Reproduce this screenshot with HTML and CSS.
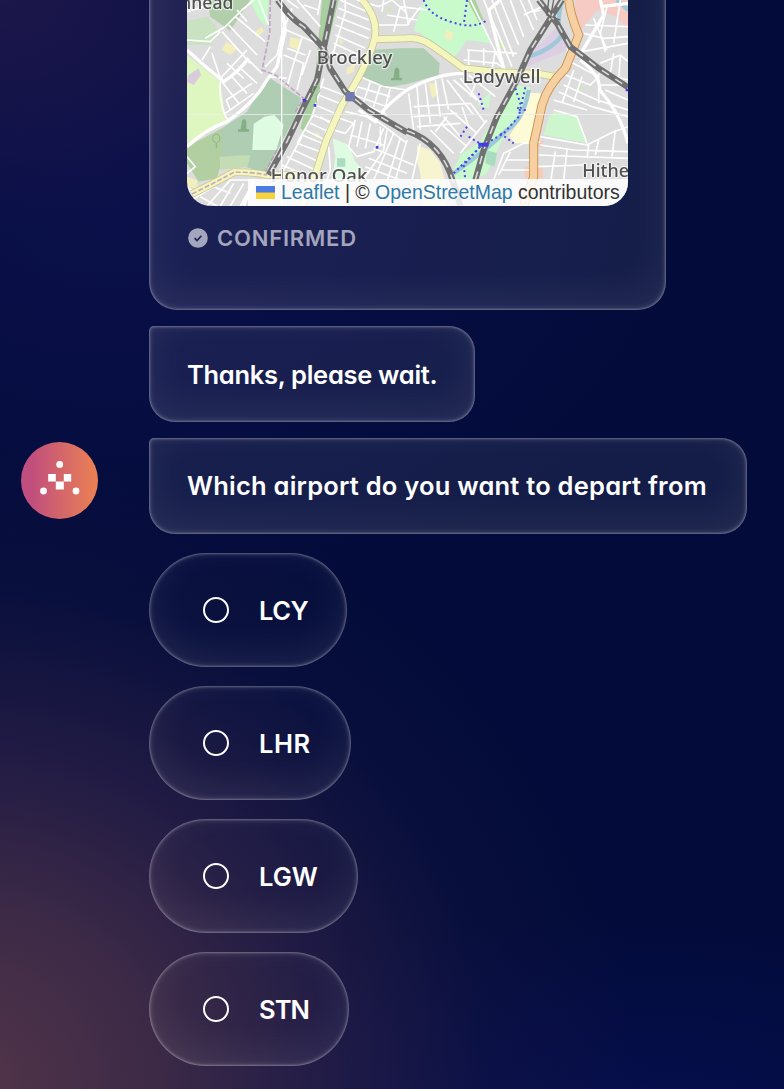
FILE: index.html
```
<!DOCTYPE html>
<html lang="en">
<head>
<meta charset="utf-8">
<title>Travel assistant</title>
<link rel="stylesheet" href="styles.css">
</head>
<body>
<main class="chat">
  <section class="card glass">
    <div class="map">
      <svg class="map-tiles" viewBox="0 0 1323 618" aria-label="Map">
        <rect width="1323" height="618" fill="#dedddd"/>
        <!-- parks and open land -->
        <path fill="#b1cfaa" d="M60 0H190L130 92L70 50Z"/>
        <path fill="#c9e3c2" d="M0 62L62 50L100 95L70 135H0Z"/>
        <path fill="#c8facc" d="M188 0H245L238 80L215 55Z"/>
        <path fill="#def6c0" d="M0 165L25 185L100 245L118 370L0 430Z"/>
        <path fill="#d8cbdc" d="M5 225L35 205L42 225L20 255L0 245Z"/>
        <path fill="#aecdb2" d="M245 232L342 295L325 350L235 518L105 480V385L180 335Z"/>
        <path fill="#b2cfa2" d="M0 440L105 385V480L90 535L35 545L0 490Z"/>
        <path fill="#dffce2" d="M200 372L232 350L262 345L290 375L268 450H196Z"/>
        <path fill="#c4dcb4" d="M98 470L190 465L182 500L100 510Z"/>
        <path fill="#a9cea0" d="M405 0H455L405 205L392 300L352 395L340 385L385 220Z"/>
        <path fill="#aecdb2" d="M545 150L640 145L710 145L758 190L755 225L660 252L590 265L515 225Z"/>
        <path fill="#c8facc" d="M710 0H850L915 130L840 120L800 175L700 100L680 90Z"/>
        <path fill="#aed1a0" d="M840 0H865L890 60L875 65Z"/>
        <path fill="#dffce2" d="M437 415L485 435L505 485L530 510L505 545H435L445 470Z"/>
        <path fill="#f2efbd" d="M310 110L345 120L335 150L307 140ZM118 125L150 145L130 165L105 150ZM205 95L225 80L230 95L208 112ZM455 115L470 125L462 135ZM383 395L400 405L388 413ZM0 530L30 540L32 565L0 560ZM480 205L505 190L500 215L478 225ZM778 90L800 98L790 125L772 112ZM725 250H745L750 285L735 295Z"/>
        <path fill="#fdfbd6" d="M1028 278L1060 280L1065 315L1042 428L985 430L965 410L985 380L1005 310Z"/>
        <path fill="#f7f5cf" d="M690 435L730 450L760 490L775 545V618H710L700 520L690 480Z"/>
        <path fill="#c8facc" d="M980 255L1030 262L1005 340L940 430L900 520L840 550L790 530L820 465L880 425Z"/>
        <path fill="#a9dcc0" d="M898 450L930 460L922 500L895 490ZM450 475H475V500H450Z"/>
        <path fill="#cdf5ce" d="M1105 335L1170 350L1203 430L1070 405L1085 350ZM870 315L912 275L905 325Z"/>
        <path fill="#f5cbc4" d="M1165 0H1323V90L1290 50L1230 30L1165 110Z"/>
        <path fill="#dccfe3" d="M1115 75L1150 120L1130 155L1010 205L1020 170Z"/>
        <path fill="none" stroke="#9fc9d8" stroke-width="13" d="M1125 0Q1105 85 1125 105Q1100 145 1030 168M1025 270Q1010 360 960 390Q910 440 800 520M1290 0L1323 30"/>
        <path fill="#f5cbb9" d="M1035 422H1070L1065 440H1035ZM1010 500H1068V535H1015ZM1145 180L1160 190L1150 215L1135 200Z"/>
        <path fill="#cdebb0" d="M600 25L615 30L605 38ZM935 118L955 135L938 155ZM1030 120L1045 130L1038 150ZM1170 258L1190 260L1180 272Z"/>

        <!-- residential streets -->
        <g class="streets">
          <path d="M105 95L190 190M125 75L210 165M145 50L235 125M55 115L115 80L165 30L200 0M70 140L45 180M75 160L100 235L180 150M120 190L170 235M105 245L155 310M130 225L180 280M155 200L210 250M180 175L225 220M100 245Q95 320 125 365M0 470L25 500L0 520M0 120L70 125L100 95M0 35L50 20L60 0M150 30L180 65M215 0L245 75M115 340L200 280M130 330L118 300L195 250"/>
          <path d="M315 25L285 100L270 165L235 200M285 85L390 130M300 145L355 165M345 115L320 190L300 260M370 150L345 225M290 165L350 190L330 270M270 0L285 35M300 0L335 25M330 0L400 80M350 15L395 30M400 0L392 45M245 230L300 235"/>
          <path d="M455 25L545 60M450 50L550 90M445 75L545 115M445 105L535 145M440 130L515 165M435 155L510 190M460 0L540 35M475 0V35L430 190M510 0L575 20L615 0L655 35M570 75H660L700 20M600 45L690 60M620 95L640 20L720 30M650 0L665 75M590 0L585 35"/>
          <path d="M405 260L470 285M395 285L470 315M385 315L455 345M375 345L445 370M370 370L435 400M355 390L425 425M410 235L375 350L330 430M345 405L405 430M330 430L400 455M320 450L395 485M300 470L385 510M285 495L375 535M345 410L290 510M315 510L305 550M400 350L430 370L415 400M425 440L430 510L400 600M445 350L500 370L475 400L440 390"/>
          <path d="M520 230L590 260L660 270M510 260L610 290M500 285L600 320M520 235L500 290M550 245L530 305M580 255L560 320M610 265L590 340M505 300L600 345M475 335L540 350L580 370L660 430M505 360L485 440L510 470L560 455L590 385M525 365L510 440M550 370L535 445M580 380V440M600 390L590 450L525 545M620 400L560 540M640 415L600 545M660 420L625 540M490 405L590 435M560 445L680 495M545 475L660 520M535 500L640 540M700 430L675 540"/>
          <path d="M665 280L680 390M690 260L700 390M715 250L730 370M745 240L760 350M765 235L785 330M680 320L850 310M680 350L810 340M690 380L820 370M780 240L860 345M800 240L870 300M820 235L890 320M845 225L925 290M770 350L820 410M790 330L870 400M825 320L845 380M850 310L895 370M870 240L850 290M820 460L900 360M730 390L800 460M760 370L840 440M780 350L745 395"/>
          <path d="M850 0L960 225M890 0L975 200M915 0L980 170M940 0L995 135M970 0L1010 110M1060 30L1040 36M840 150L990 160M830 180L930 190L980 225M845 150V205M890 145V195M925 150L915 210M1000 0L1040 90M1025 0L1050 60M1010 45L1065 20"/>
          <path d="M1185 155L1323 130M1190 100L1250 115L1323 110M1195 75L1323 80M1220 55L1260 150M1260 20L1240 100L1255 155M1300 0L1280 130M1150 185L1235 230L1210 255L1135 225M1130 255L1230 300L1323 330M1115 275L1215 320L1323 350M1160 210L1125 310M1185 230L1160 305M1100 300L1200 330M1235 220V310M1240 190L1300 165L1323 185M1280 160L1270 220M1300 165L1295 240M1235 255H1323M1255 270L1323 300M1270 225L1323 240"/>
          <path d="M1060 410L1200 435L1280 395L1323 380M1060 435L1160 450L1323 455M1055 465L1323 475M1050 500L1190 495M920 540L950 460L1010 430L1060 425M935 525L970 455M955 480H1040M945 510H1040M1105 455L1090 550M1140 450L1130 540M1205 435L1200 475M1235 420L1225 465M1285 390L1275 470M1200 430L1170 350L1100 330"/>
          <path d="M60 618L130 540L210 540M100 618L140 550M130 618L170 550M40 590L90 618M5 605L80 560L130 580M160 618L200 545M0 560L35 590"/>
        </g>
        <path class="streets wide" d="M0 150L50 195L110 245Q150 220 185 175M0 440Q60 385 120 365Q205 305 240 240M240 240L270 200L295 90L283 0M515 330L565 365Q590 320 660 270Q750 220 830 220M940 0L905 30L955 225M1140 150L1185 155L1250 45L1240 0M1180 180Q1240 225 1238 270Q1300 340 1323 430M170 618L200 545M1240 20L1323 10"/>

        <!-- main roads -->
        <path class="casing" d="M15 582Q80 550 140 517Q190 515 240 525H330M525 0Q575 55 563 115Q545 190 465 315L418 420L383 530L345 618M563 118L660 115Q700 110 740 140Q790 175 830 205L920 215M900 215L1060 222L1100 230"/>
        <path class="yellow" d="M15 582Q80 550 140 517Q190 515 240 525H330M525 0Q575 55 563 115Q545 190 465 315L418 420L383 530L345 618M563 118L660 115Q700 110 740 140Q790 175 830 205L920 215M900 215L1060 222L1100 230"/>
        <path fill="none" stroke="#c58c46" stroke-width="27" d="M1145 0Q1150 45 1175 105Q1160 145 1135 205Q1080 260 1065 315L1040 430V530L1010 618"/>
        <path fill="none" stroke="#f6d0a0" stroke-width="22" d="M1145 0Q1150 45 1175 105Q1160 145 1135 205Q1080 260 1065 315L1040 430V530L1010 618"/>
        <path fill="none" stroke="#b999ba" stroke-width="5" stroke-dasharray="15 6" opacity=".8" d="M250 0L248 100L225 210L265 225L350 295L325 335M270 450L235 515M15 582Q80 550 140 517Q190 515 240 525"/>

        <!-- railways -->
        <path class="rail" d="M272 0Q310 55 350 80L410 145L430 205L475 275L545 330L660 397M440 0L410 145L390 240L350 320L300 425L245 525M660 392Q765 430 798 545L820 618M1055 0L1110 70L1150 140L1235 205L1323 262M1125 0L1030 150L990 240L930 350L890 450L865 540"/>
        <path class="rail-dash" d="M272 0Q310 55 350 80L410 145L430 205L475 275L545 330L660 397M440 0L410 145L390 240L350 320L300 425L245 525M660 392Q765 430 798 545L820 618M1055 0L1110 70L1150 140L1235 205L1323 262M1125 0L1030 150L990 240L930 350L890 450L865 540"/>
        <path fill="none" stroke="#666" stroke-width="4" d="M1085 0L1080 45L1120 60M1100 0L1090 55"/>
        <rect x="475" y="276" width="28" height="28" fill="#737bae"/>
        <!-- footpaths and cycleways -->
        <path class="paths" d="M710 0Q725 45 790 65Q860 90 900 60M840 0L830 75M1015 262L995 350L950 400L880 440L800 520M985 265L1000 310L990 330H1025M940 400L980 430M875 280L890 330M845 410L895 440M840 380L820 410M880 440L830 495L835 540"/>
        <path fill="#413fe0" d="M347 297h10v8h-10zM380 312h8v8h-8zM566 438h8v8h-8zM874 428h30v12h-30zM1316 266h7v8h-7z"/>
        <!-- park symbols -->
        <g fill="#84ae84">
          <path d="M165 362Q173 350 178 365V388H186V395H153V388H161ZM623 208Q631 196 637 211V234H645V241H612V234H620Z"/>
          <path fill="none" stroke="#8fb58a" stroke-width="3" d="M78 422A11 14 0 1 1 98 422L88 430V445M88 430L78 422M378 276A11 14 0 1 1 398 276L388 284V310"/>
        </g>
        <!-- place names -->
        <g class="places">
          <text x="-20" y="27" textLength="159" lengthAdjust="spacingAndGlyphs">nhead</text>
          <text x="389" y="193" textLength="227" lengthAdjust="spacingAndGlyphs">Brockley</text>
          <text x="827" y="248" textLength="234" lengthAdjust="spacingAndGlyphs">Ladywell</text>
          <text x="251" y="547" textLength="290" lengthAdjust="spacingAndGlyphs">Honor Oak</text>
          <text x="1186" y="532" textLength="140" lengthAdjust="spacingAndGlyphs">Hithe</text>
        </g>
        <path fill="#fff" opacity=".95" d="M282 0h4v618h-4z"/>
        <path fill="#eee" opacity=".8" d="M0 342h1323v3H0z"/>
      </svg>
      <div class="attribution">
        <svg class="flag" viewBox="0 0 19 13"><path fill="#4c7be1" d="M0 0h19v7H0z"/><path fill="#f8d23c" d="M0 6.5h19V13H0z"/></svg>
        <span><a>Leaflet</a> | © <a>OpenStreetMap</a> contributors</span>
      </div>
    </div>
    <div class="confirmed">
      <svg class="check" viewBox="0 0 20 20"><circle cx="10" cy="10" r="9.8" fill="#a4a6bd"/><path d="M6.6 10.2L9 12.5L13.4 7.7" fill="none" stroke="#1c2150" stroke-width="1.6"/></svg>
      <span>CONFIRMED</span>
    </div>
  </section>

  <p class="bubble glass bubble-wait"><span>Thanks, please wait.</span></p>

  <div class="turn">
    <svg class="avatar" viewBox="0 0 77 77">
      <defs><linearGradient id="warm"><stop offset=".12" stop-color="#c04e7e"/><stop offset=".95" stop-color="#e97f55"/></linearGradient></defs>
      <circle cx="38.5" cy="38.5" r="38.5" fill="url(#warm)"/>
      <g fill="#fff"><circle cx="38.7" cy="22.4" r="3.4"/><circle cx="22.5" cy="49" r="3.4"/><circle cx="55" cy="49" r="3.4"/><path d="M27.2 32h7.6v7.4h-7.6zM42.8 32h7.4v7.4h-7.4zM34.8 39.4h8v8.1h-8z"/></g>
    </svg>
    <p class="bubble glass bubble-question"><span>Which airport do you want to depart from</span></p>
  </div>

  <div class="options">
    <label class="option glass option-lcy"><i class="radio"></i><span>LCY</span></label>
    <label class="option glass option-lhr"><i class="radio"></i><span>LHR</span></label>
    <label class="option glass option-lgw"><i class="radio"></i><span>LGW</span></label>
    <label class="option glass option-stn"><i class="radio"></i><span>STN</span></label>
  </div>
</main>
</body>
</html>
```
FILE: styles.css
```
* { box-sizing: border-box; }

body {
  margin: 0;
  background: #020b38;
  color: #fff;
  font-family: Inter, Lato, sans-serif;
  font-feature-settings: "cv11";
}

.chat {
  height: 1089px;
  padding-left: 149px;
  overflow: hidden;
  display: flex;
  flex-direction: column;
  align-items: flex-start;
  background:
    radial-gradient(ellipse 680px 640px at -40px 1090px, rgba(88, 56, 74, .95) 0, rgba(74, 49, 74, .82) 28%, rgba(54, 38, 76, .56) 55%, rgba(30, 27, 70, .25) 78%, rgba(20, 20, 65, 0)),
    radial-gradient(ellipse 330px 230px at 0 0, rgba(36, 26, 78, .75), rgba(20, 20, 80, 0)),
    radial-gradient(ellipse 620px 420px at 110px 200px, rgba(14, 18, 80, .75), rgba(6, 14, 70, 0)),
    radial-gradient(ellipse 500px 220px at 640px 1130px, rgba(8, 16, 86, .75), rgba(4, 12, 70, 0)),
    #020b39;
}

.glass {
  background: rgba(255, 255, 255, .075);
  box-shadow:
    inset 0 0 2px 1px rgba(255, 255, 255, .24),
    inset 0 0 6px rgba(255, 255, 255, .24),
    inset 0 -12px 42px rgba(255, 255, 255, .075);
}

.card {
  flex: none;
  width: 517px;
  height: 370px;
  margin-top: -60px;
  padding: 60px 38px 0;
  border-radius: 4px 28px 28px 28px;
}

.map {
  display: grid;
  width: 441px;
  height: 206px;
  overflow: hidden;
  border-radius: 0 0 24px 24px;
}

.map-tiles, .attribution { grid-area: 1 / 1; }
.map-tiles { width: 441px; height: 206px; filter: blur(.4px); }

.streets { fill: none; stroke: #fff; stroke-width: 5; stroke-linejoin: round; }
.streets.wide { stroke-width: 10; }
.casing { fill: none; stroke: #c9c795; stroke-width: 23; }
.yellow { fill: none; stroke: #f5f6bd; stroke-width: 18; }
.rail { fill: none; stroke: #707070; stroke-width: 18; }
.rail-dash { fill: none; stroke: #d9d9d9; stroke-width: 5; stroke-dasharray: 25 23; }
.paths { fill: none; stroke: #4b48e8; stroke-width: 6; stroke-dasharray: 6 9; }

.places {
  font: 500 55px "Noto Sans", sans-serif;
  fill: #505050;
  stroke: rgba(255, 255, 255, .6);
  stroke-width: 8;
  stroke-linejoin: round;
  paint-order: stroke;
}

.attribution {
  place-self: end;
  display: flex;
  align-items: center;
  gap: 6px;
  width: 380px;
  height: 27px;
  padding: 0 8px;
  background: rgba(255, 255, 255, .84);
  color: #333;
  font: 19.48px/27px "Liberation Sans", Arial, sans-serif;
  white-space: nowrap;
  z-index: 1;
}

.attribution a { color: #2d79a8; }
.flag { flex: none; width: 19px; height: 13px; }

.confirmed {
  display: flex;
  align-items: center;
  gap: 9px;
  height: 28px;
  margin-top: 18px;
  padding-left: 1px;
  color: #a4a6bd;
  font-size: 22px;
  font-weight: 600;
  letter-spacing: .8px;
}

.check { width: 20px; height: 20px; }

.bubble {
  flex: none;
  display: flex;
  align-items: center;
  height: 96px;
  margin: 16px 0 0;
  padding: 0 0 0 38px;
  border-radius: 5px 26px 26px 26px;
  font-size: 25.5px;
  font-weight: 600;
  white-space: nowrap;
}

.bubble-wait { width: 326px; letter-spacing: -.3px; }
.bubble-question { width: 598px; padding-bottom: 2px; letter-spacing: .22px; }

.turn {
  display: flex;
  align-items: flex-start;
  gap: 51px;
  margin-left: -128px;
}

.avatar { flex: none; width: 77px; height: 77px; margin-top: 20px; }

.options {
  display: flex;
  flex-direction: column;
  gap: 19px;
  margin-top: 19px;
}

.option {
  display: flex;
  align-items: center;
  gap: 30px;
  height: 114px;
  padding-left: 54px;
  border-radius: 57px;
  background: rgba(255, 255, 255, .015);
  font-size: 25.5px;
  font-weight: 600;
}

.option-lcy { width: 198px; letter-spacing: -.5px; }
.option-lhr { width: 202px; letter-spacing: .5px; }
.option-lgw { width: 209px; }
.option-stn { width: 200px; letter-spacing: -.9px; }

.radio {
  width: 26px;
  height: 26px;
  border: 2.5px solid #fff;
  border-radius: 50%;
}
```
